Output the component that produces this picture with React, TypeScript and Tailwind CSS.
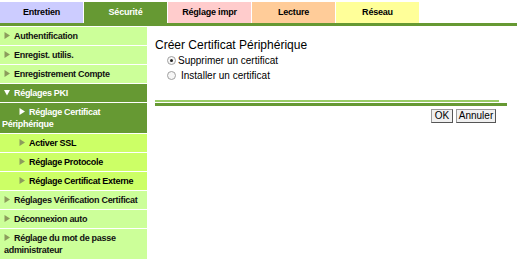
const TABS = [
  { label: 'Entretien', cls: 'bg-[#ccccff] text-black' },
  { label: 'Sécurité', cls: 'bg-[#669933] text-white' },
  { label: 'Réglage impr', cls: 'bg-[#ffcccc] text-black' },
  { label: 'Lecture', cls: 'bg-[#ffcc99] text-black' },
  { label: 'Réseau', cls: 'bg-[#ffff99] text-black' }
];

type MenuItem = {
  label: string;
  kind: 'light' | 'dark' | 'sub';
  indent?: boolean;
  open?: boolean;
};

const MENU: MenuItem[] = [
  { label: 'Authentification', kind: 'light' },
  { label: 'Enregist. utilis.', kind: 'light' },
  { label: 'Enregistrement Compte', kind: 'light' },
  { label: 'Réglages PKI', kind: 'dark', open: true },
  { label: 'Réglage Certificat Périphérique', kind: 'dark', indent: true },
  { label: 'Activer SSL', kind: 'sub' },
  { label: 'Réglage Protocole', kind: 'sub' },
  { label: 'Réglage Certificat Externe', kind: 'sub' },
  { label: 'Réglages Vérification Certificat', kind: 'light' },
  { label: 'Déconnexion auto', kind: 'light' },
  { label: 'Réglage du mot de passe administrateur', kind: 'light' }
];

function Arrow({ open, white }: { open?: boolean; white?: boolean }) {
  const fill = white ? '#ffffff' : '#8c9c5c';
  return (
    <svg width="6" height="7" viewBox="0 0 6 7" className="inline-block mr-[4px] align-[0px]">
      {open ? (
        <polygon points="0,1 6,1 3,6.5" fill={fill} />
      ) : (
        <polygon points="0.5,0 6,3.5 0.5,7" fill={fill} />
      )}
    </svg>
  );
}

function SideMenu() {
  return (
    <div className="w-[147px] flex flex-col gap-[1px] pt-[1px]">
      {MENU.map((item) => {
        const bg =
          item.kind === 'dark'
            ? 'bg-[#669933] text-white'
            : item.kind === 'sub'
              ? 'bg-[#ccff66] text-black'
              : 'bg-[#ccff99] text-[#111]';
        const pad = item.kind === 'sub' ? 'pl-[19px]' : item.indent ? 'pl-[2px]' : 'pl-[4px]';
        return (
          <div
            key={item.label}
            className={`${bg} ${pad} pr-1 py-[3px] text-[9px] leading-[12px] font-bold tracking-[-0.3px]`}
          >
            {item.indent && <span className="inline-block w-[17px]" />}
            <Arrow open={item.open} white={item.kind === 'dark'} />
            {item.label}
          </div>
        );
      })}
    </div>
  );
}

function Radio({ checked, label }: { checked?: boolean; label: string }) {
  return (
    <label className="flex items-center gap-[2px] h-[15px] text-[10px]">
      <span className="w-[9px] h-[9px] rounded-full border border-[#a0a0a0] bg-[#f6f6f6] flex items-center justify-center">
        {checked && <span className="w-[3px] h-[3px] rounded-full bg-[#222]" />}
      </span>
      <span className={checked ? '' : 'ml-[3px]'}>{label}</span>
    </label>
  );
}

export default function App() {
  return (
    <div
      className="w-[517px] h-[262px] bg-white overflow-hidden text-black"
      style={{ fontFamily: '"Liberation Sans", Arial, sans-serif' }}
    >
      <div className="flex gap-[1px] pt-[2px] h-[23px]">
        {TABS.map((t) => (
          <div
            key={t.label}
            className={`${t.cls} w-[83px] flex items-center justify-center text-[9px] font-bold tracking-[-0.2px]`}
          >
            {t.label}
          </div>
        ))}
      </div>
      <div className="h-[3px] bg-[#669933]" />
      <div className="flex">
        <SideMenu />
        <div className="flex-1 pl-[8px] pr-[10px]">
          <div className="text-[12px] leading-[15px] mt-[12px]">Créer Certificat Périphérique</div>
          <div className="pl-[12px] flex flex-col">
            <Radio checked label="Supprimer un certificat" />
            <Radio label="Installer un certificat" />
          </div>
          <div className="mt-[17px] h-[2px] bg-[#99cc66] mr-[8px]" />
          <div className="mt-[1px] h-[3px] bg-[#669933]" />
          <div className="flex justify-end gap-[3px] mt-[3px] pr-[11px]">
            <button className="h-[14px] w-[22px] text-[10px] leading-[12px] bg-[#f0f0f0] border border-[#9a9a9a] border-r-[#555] border-b-[#555]">
              OK
            </button>
            <button className="h-[14px] w-[40px] text-[10px] leading-[12px] bg-[#f0f0f0] border border-[#9a9a9a] border-r-[#555] border-b-[#555]">
              Annuler
            </button>
          </div>
        </div>
      </div>
    </div>
  );
}
